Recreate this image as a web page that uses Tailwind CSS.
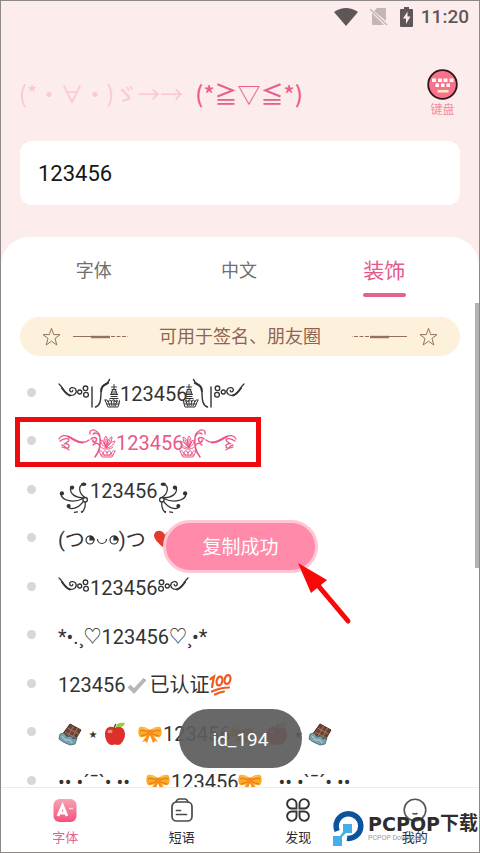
<!DOCTYPE html>
<html lang="zh-CN">
<head>
<meta charset="utf-8">
<meta name="viewport" content="width=device-width, initial-scale=1">
<title>字体</title>
<script src="https://cdn.jsdelivr.net/npm/@tailwindcss/browser@4"></script>
</head>
<body class="bg-[#fdecec] font-[Roboto,'Noto_Sans_CJK_SC','DejaVu_Sans',sans-serif]">

<svg class="hidden" aria-hidden="true">
  <symbol id="swirl" viewBox="0 0 32 28">
    <g fill="none" stroke="currentColor" stroke-width="1.3" stroke-linecap="round">
      <path d="M1 4C5 7 6 14 12 15.300C17 16 19.500 12 17.500 9C15.500 6.500 11 7.500 11.800 10.500C12.300 12.500 15 12 14.700 10.300"/>
      <path d="M4 8C6 11 8 14 12 15.500" stroke-width="2"/>
      <circle cx="21.700" cy="12" r="2"/><circle cx="27.500" cy="8.300" r="2.300"/><circle cx="28" cy="14.800" r="2.400"/>
    </g>
  </symbol>
  <symbol id="stupa" viewBox="0 0 30 32">
    <g fill="none" stroke="currentColor" stroke-width="1.400" stroke-linecap="round">
      <path d="M2 9V29"/>
      <path d="M19.500 1.500C18 7 12 6 11.300 11C10.500 18 12 27 5.500 29"/>
      <path d="M18 5C14 7 11.500 8 11.200 13" stroke-width="2"/>
      <g stroke-width="1">
        <path d="M24 6.500V12M21.500 9H26.500M22 11.500H26M22.500 12L21 16H27L25.500 12M20.500 16.500H27.500M21 18.500H27M20 20.500H28M21.500 14H26.500"/>
        <path d="M15 22L18 29H28L30 22M18 23L20 28M21 22.500L22 28M24 22V28M27 22.500L25.500 28M15 22C17 21 18 23 18 24C19 21 21 22 21.500 24C22 21 25 21 25 24C26 21 28 22 28 24M17 26H29"/>
      </g>
    </g>
  </symbol>
  <symbol id="lotus" viewBox="0 0 58 32">
    <g fill="none" stroke="currentColor" stroke-width="1.300" stroke-linecap="round">
      <path d="M1 12C3 8 7 8 11 10C18 15 25 18 31 13"/>
      <path d="M10 9.500C16 12 20 16 25 15.500" stroke-width="2"/>
      <path d="M2 14C6 11 11 11 11 13C11 15 7 16 6 17C9 16 12 18 11 20C10 22 6 21 4 20M4 18C7 18 8 22 11 23"/>
      <path d="M32 7C31 3 35 2 38 4C41 6 42 8 42 10M35 7C37 5 40 6 42 10"/>
      <path d="M33 12C36 9 40 11 38 14C37 16 34 15 35 13M42 11C43 19 41 25 37 30" stroke-width="1.600"/>
      <path d="M35 18C38 15 41 16 42 20"/>
      <g stroke-width="1">
        <path d="M48 21C43 18 42 14 44 13C46 14 48 18 48 21C45 14 46 11 48 9C50 12 50 17 48 21C49 14 51 11 54 10C54 14 52 18 48 21C51 16 54 15 57 14C56 18 52 21 48 21M43 20C45 23 52 23 55 20M48 12V20M52 13L49 19M45 15L48 20"/>
        <path d="M41 24L44 30H54L57 24M41 24C43 23 45 25 45 27C45 23 48 23 49 26C50 23 53 23 53 27C54 24 56 23 57 24M45 26L47 29M49 25V29M53 26L51 29M43 28H55"/>
      </g>
    </g>
  </symbol>
  <symbol id="plume" viewBox="0 0 33 44">
    <g fill="none" stroke="currentColor" stroke-width="1.300" stroke-linecap="round">
      <circle cx="28" cy="31" r="2.300"/>
      <path d="M25.500 30C17 34 4 33 3 25M26 29C18 29 12 25 13 19M27.500 28.500C22 25 20 17 26 15"/>
      <path d="M26 33C21 40 13 42 10 38M28 33.500C28.500 38 27 42 24.500 44M17 44L20 43.500"/>
    </g>
    <g fill="currentColor">
      <circle cx="4" cy="24.500" r="2.200"/><circle cx="14.500" cy="18.500" r="2.200"/><ellipse cx="26.500" cy="15" rx="2.800" ry="1.800"/><circle cx="11" cy="37.500" r="2.100"/><circle cx="24.500" cy="43.500" r="1"/>
    </g>
  </symbol>
  <symbol id="bow" viewBox="0 0 24 18">
    <path d="M10 9L4 17L7 16L9 18L12 10L15 18L17 16L20 17L14 9Z" fill="#f7941d"/>
    <path d="M12 6C8 1 2 1 1 3C0 6 0 10 2 12C5 13 9 11 12 9C15 11 19 13 22 12C24 10 24 6 23 3C22 1 16 1 12 6Z" fill="#fba926"/>
    <path d="M10 7C7 5 4 5 2 6M10 9L3 11M14 7C17 5 20 5 22 6M14 9L21 11" stroke="#e27d12" stroke-width="1.200" fill="none"/>
    <rect x="9" y="4.500" width="6" height="6" rx="2" fill="#f58a16"/><path d="M3 3Q6 2 9 5M21 3Q18 2 15 5" stroke="#ffd05a" fill="none"/>
  </symbol>
  <symbol id="apple" viewBox="0 0 22 24">
    <path d="M11 6C14 3 21 5 21 12C21 18 17 23 14 23Q11 22 8 23C4 23 1 18 1 12C1 5 7 3 11 6Z" fill="#df2f2b"/>
    <path d="M10.500 8Q10 4 12 2" stroke="#7a4a22" stroke-width="1.300" fill="none"/><path d="M12 5C12 1 17 0 21 1C20 5 16 6 12 5Z" fill="#9ccc3c"/>
    <ellipse cx="6" cy="9.500" rx="2.500" ry="1.800" fill="#f58a83"/>
  </symbol>
  <symbol id="choc" viewBox="0 0 24 24">
    <path d="M12 2L23 8L16 20L4 13Z" fill="#6b4436" stroke="#4a2c22"/>
    <path d="M15.500 4L9 16M19.500 6L13 18M9.500 6L20.500 12M7 10L18 16" stroke="#a87864" stroke-width="1"/>
    <path d="M2 12L6 11L9 15L13 14L15 17L19 16L17 22L12 23Q4 20 1 17Z" fill="#78a3ae" stroke="#43616c" stroke-width=".8"/><path d="M4 14L7 18L12 18L14 21" stroke="#b8d4dc" fill="none"/>
  </symbol>
  <symbol id="star-line" viewBox="0 0 90 20">
    <g fill="none" stroke="#96705f">
      <path d="M10.500 1.300L12.700 7.600H19L14 11.500L15.800 18L10.500 14.200L5.200 18L7 11.500L2 7.600H8.300Z"/>
      <path d="M32 9.500H69" stroke-width="1"/><path d="M50 10H69" stroke-width="2.400"/><path d="M70 9.500H87" stroke-dasharray="4 1.500"/>
    </g>
  </symbol>
</svg>

<div class="relative flex h-screen flex-col overflow-hidden border border-[#8f8888]">
  <header class="px-[19px] pb-8">
    <div class="-mr-[9px] flex h-8 items-center justify-end gap-2 text-[#5f5658]">
      <svg class="h-[18px] w-6" viewBox="0 0 24 18" aria-label="Wi-Fi"><path d="M0 4Q12-4 24 4L12 18Z" fill="currentColor"/></svg>
      <svg class="ml-1 h-[18px] w-[18px]" viewBox="0 0 18 18"><path d="M7 0H15Q16 0 16 1V13L4 3ZM2 5L14 17H3Q2 17 2 16Z" fill="#c4b5b6"/><path d="M0 1L17 17" stroke="#c4b5b6" stroke-width="1.500"/></svg>
      <svg class="ml-1 h-5 w-[13px]" viewBox="0 0 13 20"><path d="M4 0H9V2H12Q13 2 13 3V19Q13 20 12 20H1Q0 20 0 19V3Q0 2 1 2H4Z" fill="currentColor"/><path d="M7.500 4.500L3 11.500H6V17L10.500 9.500H7.500Z" fill="#fdecec"/></svg>
      <time class="text-[19px] leading-6 font-medium">11:20</time>
    </div>
    <div class="flex h-[108px] items-center justify-between pt-3">
      <h1 class="-ml-px flex gap-3 font-['Noto_Sans_CJK_JP',sans-serif] text-[23px] leading-8 whitespace-nowrap">
        <span class="font-normal text-[#f9c9d5]">(*・∀・)ゞ→→</span>
        <span class="font-medium text-[#ea5f8e]">(*≧▽≦*)</span>
      </h1>
      <button type="button" class="mr-0.5 flex flex-col items-center text-xs leading-4 text-[#f28da2] gap-[2px]">
        <svg class="size-[31px]" viewBox="0 0 31 31"><circle cx="15.500" cy="15.500" r="14.300" fill="#f9728c" stroke="#30151b" stroke-width="1.800"/><path d="M5 9.500H9V13H5ZM11 9.500H15V13H11ZM16.500 9.500H20.500V13H16.500ZM22.500 9.500H26.500V13H22.500ZM8.500 14.500H12V18H8.500ZM14 14.500H17.500V18H14ZM19.500 14.500H23V18H19.500Z" fill="#fff"/><rect x="10.500" y="21" width="11" height="2.500" fill="#ffe9b8"/></svg>
        键盘
      </button>
    </div>
    <input type="text" value="123456" aria-label="输入文字" class="block h-16 w-full rounded-xl bg-white px-[18px] text-[22px] text-[#161616] outline-none">
  </header>

  <main class="flex min-h-0 flex-1 flex-col rounded-t-[28px] bg-white">
    <nav class="grid grid-cols-3 pr-[22px] pl-5 text-lg text-[#6f6f6f]" aria-label="分类">
      <a href="#font" class="flex h-[60px] items-center justify-center pt-2">字体</a>
      <a href="#chinese" class="flex h-[60px] items-center justify-center pt-2">中文</a>
      <a href="#decor" aria-current="page" class="flex h-[60px] flex-col items-center justify-between pt-[18px] text-[21px] leading-8 text-[#e9588a]">装饰<span class="h-1 w-[43px] shrink-0 rounded-sm bg-[#e0658c]"></span></a>
    </nav>
    <div class="mx-[19px] mt-5 flex h-[39px] shrink-0 items-center justify-between rounded-full bg-[#fdf1dc] px-[21px] text-lg text-[#8f6552]">
      <svg class="h-5 w-[90px]"><use href="#star-line"/></svg>
      <p class="whitespace-nowrap">可用于签名、朋友圈</p>
      <svg class="h-5 w-[90px] -scale-x-100"><use href="#star-line"/></svg>
    </div>

    <ul class="mt-3 min-h-0 flex-1 overflow-hidden pl-[26px] text-xl whitespace-nowrap text-[#333] [&>li]:flex [&>li]:items-center [&>li]:gap-[22px] [&>li]:odd:h-12 [&>li]:even:h-[49px] [&>li]:before:size-[9px] [&>li]:before:shrink-0 [&>li]:before:rounded-full [&>li]:before:bg-[#d7d7d7] [&>li>div]:flex [&>li>div]:h-12 [&>li>div]:items-center [&>li>div]:pt-1 [&_svg]:shrink-0">
      <li><div>
        <svg class="h-7 w-8"><use href="#swirl"/></svg><svg class="h-8 w-[30px]"><use href="#stupa"/></svg>123456<svg class="-ml-1 h-8 w-[30px] -scale-x-100"><use href="#stupa"/></svg><svg class="h-7 w-8 -scale-x-100"><use href="#swirl"/></svg>
      </div></li>
      <li><div class="text-[#e9588a]">
        <svg class="h-8 w-[58px]"><use href="#lotus"/></svg>123456<svg class="-ml-1 h-8 w-[58px] -scale-x-100"><use href="#lotus"/></svg>
      </div></li>
      <li><div>
        <svg class="h-11 w-8"><use href="#plume"/></svg>123456<svg class="h-11 w-8 -scale-x-100"><use href="#plume"/></svg>
      </div></li>
      <li><div>
        <span>(つ</span><svg class="h-3 w-[34px]" viewBox="0 0 34 12" role="img" aria-label="◔◡◔" fill="none" stroke="currentColor" stroke-width="1.200"><circle cx="5" cy="6" r="4"/><path d="M5 2V6H9A4 4 0 0 0 5 2Z" fill="currentColor"/><path d="M12.500 5A4.500 4.500 0 0 0 21.500 5"/><circle cx="29" cy="6" r="4"/><path d="M29 2V6H33A4 4 0 0 0 29 2Z" fill="currentColor"/></svg><span>)つ</span>
        <svg class="ml-2 h-5 w-[22px]" viewBox="0 0 22 20"><path d="M11 19C3 12 0 9 0 5C1 0 8-1 11 5C14-1 21 0 22 5C22 9 19 12 11 19Z" fill="#e23b2e"/></svg>
      </div></li>
      <li><div>
        <svg class="h-7 w-8"><use href="#swirl"/></svg>123456<svg class="h-7 w-8 -scale-x-100"><use href="#swirl"/></svg>
      </div></li>
      <li><div>*•.¸<span class="text-lg">♡</span>123456<span class="text-lg">♡</span>¸•*</div></li>
      <li><div>
        123456<svg class="mx-[2px] h-[17px] w-5" viewBox="0 0 20 17"><path d="M2 9L7 14L18 2" fill="none" stroke="#b7b7b7" stroke-width="4"/></svg>已认证<svg class="h-[22px] w-6" viewBox="0 0 24 22" fill="none" stroke="#ee5a24" stroke-width="2.200" stroke-linecap="round"><path d="M1.500 5L5 2.500L3 13"/><ellipse cx="10.500" cy="7" rx="2.800" ry="4.500" transform="rotate(15 10.500 7)"/><ellipse cx="18.500" cy="5.500" rx="2.800" ry="4.500" transform="rotate(15 18.500 5.500)"/><path d="M3 17.500Q12 13.500 20 13.500M6 20.500Q11 18 15 17.500"/></svg>
      </div></li>
      <li><div>
        <svg class="size-6"><use href="#choc"/></svg><span class="w-[22px] text-center">⋆</span><svg class="h-6 w-[22px]"><use href="#apple"/></svg><svg class="ml-3 mr-px h-[18px] w-6"><use href="#bow"/></svg>123456<svg class="h-[18px] w-6"><use href="#bow"/></svg><svg class="ml-3 h-6 w-[22px]"><use href="#apple"/></svg><span class="w-5 text-center">⋆</span><svg class="size-6"><use href="#choc"/></svg>
      </div></li>
      <li><div>
        <span>•• •´¯`• ••</span><svg class="ml-4 mr-px h-[18px] w-6"><use href="#bow"/></svg>123456<svg class="mr-4 h-[18px] w-6"><use href="#bow"/></svg><span>•• •`¯´• ••</span>
      </div></li>
    </ul>
  </main>

  <nav class="grid shrink-0 grid-cols-4 border-t border-[#ececec] bg-white px-1.5 pt-2 pb-1 text-[13px] leading-5 text-[#2b2b2b] [&>a]:flex [&>a]:flex-col [&>a]:items-center [&>a]:gap-1" aria-label="主导航">
    <a href="#fonts" aria-current="page" class="text-[#e0648f]">
      <svg class="size-7" viewBox="0 0 28 28"><defs><linearGradient id="pink" x2="0" y2="1"><stop stop-color="#f7a3b4"/><stop offset="1" stop-color="#f4517f"/></linearGradient></defs><rect x="2.500" y="3" width="23" height="23" rx="6" fill="url(#pink)"/><path d="M7 20L11.500 9.500L16 20M9 17H14" fill="none" stroke="#fff" stroke-width="2.800"/><path d="M18 12.500H22" stroke="#ffd7df" stroke-width="1.500"/></svg>字体</a>
    <a href="#phrases">
      <svg class="size-7" viewBox="0 0 28 28" fill="none" stroke="#4a4a4a" stroke-width="1.700" stroke-linecap="round"><rect x="4" y="6" width="20" height="19" rx="4.500"/><path d="M8 6Q9 3 11 3H17Q19 3 20 6M8.500 14.500H12.500M8.500 18.500H18.500"/></svg>短语</a>
    <a href="#discover">
      <svg class="size-7" viewBox="0 0 28 28" fill="none" stroke="#333" stroke-width="1.900"><path d="M12.500 12.500H8A4.700 4.700 0 1 1 12.500 8ZM15.500 12.500V8A4.700 4.700 0 1 1 20 12.500ZM12.500 15.500V20A4.700 4.700 0 1 1 8 15.500ZM15.500 15.500H20A4.700 4.700 0 1 1 15.500 20Z"/></svg>发现</a>
    <a href="#mine">
      <svg class="size-7" viewBox="0 0 28 28" fill="none" stroke="#555" stroke-width="1.600" stroke-linecap="round"><circle cx="14" cy="14" r="10.800"/><path d="M12 17.500Q14 18.500 16 17.500"/></svg>我的</a>
  </nav>

  <div class="absolute top-[302px] right-0 h-[265px] w-1 bg-[#b3b3b3]"></div>
  <div class="absolute top-[416px] left-[14px] h-[50px] w-[246px] border-5 border-[#ee0a0f]"></div>
  <div role="status" class="absolute top-[519px] left-[162px] flex h-[53px] w-[155px] items-center justify-center rounded-full border-3 border-[#ffc6d4] bg-[#ff8aaa] pt-1 text-[19px] text-white">复制成功</div>
  <svg class="absolute top-[560px] left-[295px] h-16 w-14" viewBox="0 0 56 64"><path d="M20 22L52 60" stroke="#f80808" stroke-width="5" stroke-linecap="round"/><path d="M2 2L31 19L15 32Z" fill="#f80808"/></svg>
  <div role="status" class="absolute top-[708px] left-[178px] flex h-[59px] w-[123px] items-center justify-center rounded-[30px] bg-[#5c5c5c]/93 pt-1 text-[19px] text-white">id_194</div>
  <div class="absolute right-px bottom-1.5 flex items-center gap-1">
    <svg class="h-9 w-[31px]" viewBox="0 0 31 36"><path d="M4.200 21A12.300 12.300 0 1 1 14 28.300" fill="none" stroke="#0b549d" stroke-width="5.500"/><path d="M10 14H19V23H13L9 27V36H0V26H7L10 22Z" fill="#45aee8"/></svg>
    <div class="text-[#2d2d2d]">
      <p class="flex items-center text-[19px] leading-5 font-bold whitespace-nowrap"><span class="font-['DejaVu_Sans',sans-serif]">PCPOP</span>下载</p>
      <p class="text-[7px] leading-2 text-[#999]">PCPOP Download</p>
    </div>
  </div>
</div>
</body>
</html>
